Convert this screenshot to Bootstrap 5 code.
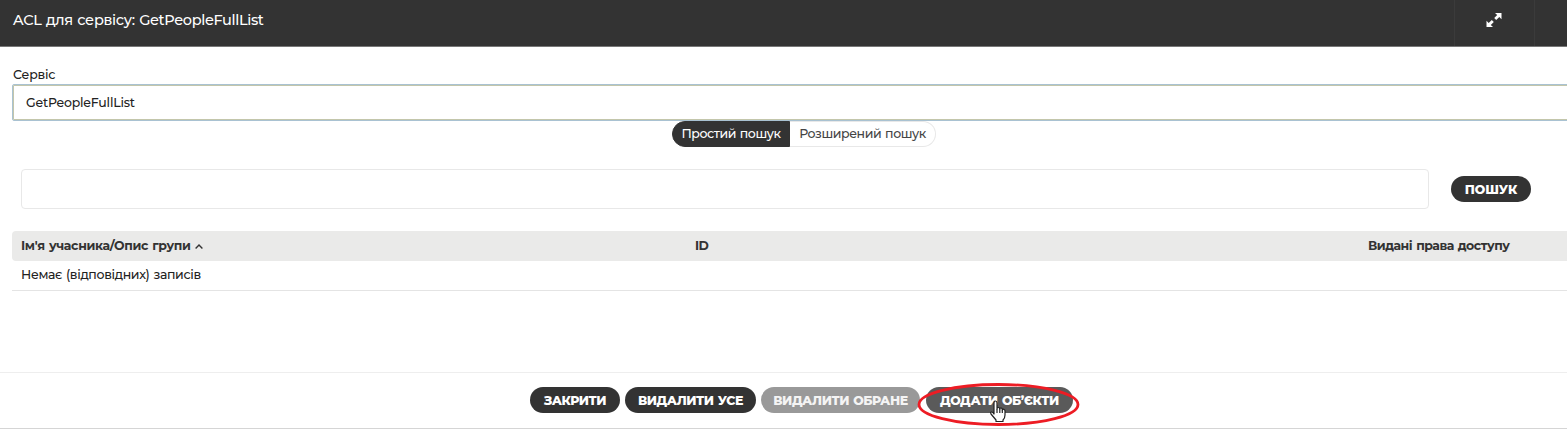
<!DOCTYPE html>
<html lang="uk">
<head>
<meta charset="utf-8">
<meta name="viewport" content="width=device-width, initial-scale=1">
<title>ACL для сервісу</title>
<link href="https://cdn.jsdelivr.net/npm/bootstrap@5.3.0/dist/css/bootstrap.min.css" rel="stylesheet">
<style>
body{font-family:Montserrat,Inter,sans-serif;font-size:12.5px;line-height:20px;color:#222;background:#fff;height:429px;overflow:hidden;word-spacing:1px}
.dialog-head{height:47px;background:#333;border-bottom:1px solid #777;color:#fff;padding-left:13px}
.dialog-title{font-size:14.5px;font-weight:500;line-height:20px;padding-top:10px;margin:0;letter-spacing:-.34px}
.head-cell{width:80px;border-left:1px solid #3b3b3b}
.head-edge{width:33px;border-left:1px solid #3b3b3b}
.service-label{display:block;margin:18px 0 -1px 13px;height:20px;font-weight:500;letter-spacing:-.2px}
.service-input{height:37px;margin-left:12px;width:1565px;padding:0 13px;border:1px solid #a9c2d2;box-shadow:inset 0 0 0 1px #c3c6ab;border-radius:2px;color:#222;font-weight:500;font-size:12.5px;letter-spacing:-.2px;line-height:33px;outline:0}
.service-input:focus,.service-input:read-only{border-color:#a9c2d2}
.tabs-line{height:26px;margin-left:672px}
.mode{height:26px;border:1px solid #e8e8e8;line-height:24px;letter-spacing:-.43px;color:#444;text-align:center;font-weight:500}
.mode-on{width:118px;background:#333;border-color:#333;color:#fff;border-radius:13px 0 0 13px}
.mode-off{width:146px;border-left:0;border-radius:0 13px 13px 0}
.search-line{margin:22px 0 0 21px;height:40px}
.search-box{width:1408px;height:40px;border:1px solid #e8e8e8;border-radius:4px}
.pill{height:26px;border:0;border-radius:13px;padding:1px 0 0;background:#333;color:#fff;font-size:12.5px;font-weight:800;line-height:26px;text-align:center;white-space:nowrap;letter-spacing:-.45px;word-spacing:1px}
.pill-search{letter-spacing:0}
.pill:disabled{background:#999;color:#f4f4f4;opacity:1}
.pill-hover{background:#5a5a5a;letter-spacing:-.35px}
.acl-table{margin:22px 0 0 12px;width:1565px;table-layout:fixed;border-collapse:separate;border-spacing:0}
.acl-table th{height:30px;background:#eaeae9;padding:0 0 0 9px;font-weight:700;color:#333;letter-spacing:-.48px}
.acl-table th:first-child{border-radius:4px 0 0 4px;letter-spacing:-.34px}
.acl-table td{height:30px;padding:0 0 1px 9px;border-bottom:1px solid #e4e4e4;font-weight:500;letter-spacing:-.34px}
.dialog-foot{margin-top:81px;height:57px;border-top:1px solid #eee;border-bottom:1px solid #d5d5d5;padding:14px 0 0 530px}
.highlight{left:-9px;top:-5px;z-index:2}
.pointer{left:63px;top:13px;z-index:3}
</style>
</head>
<body class="d-flex flex-column">
<header class="dialog-head d-flex flex-shrink-0">
  <h1 class="dialog-title flex-grow-1">ACL для сервісу: GetPeopleFullList</h1>
  <div class="head-cell d-flex justify-content-center">
    <svg class="mt-2" width="22" height="24" viewBox="2.500 0 22 24" fill="#fff"><path d="M13.500 5H20v6.200l-2.200-2.100-3.100 2.900-2-2 3-3zM11.500 19H5v-6.200l2.200 2.100 3.100-2.900 2 2-3 3z"/></svg>
  </div>
  <div class="head-edge"></div>
</header>
<main>
  <label class="service-label" for="service">Сервіс</label>
  <input id="service" class="service-input d-block" value="GetPeopleFullList" readonly>
  <div class="tabs-line d-flex">
    <div class="mode mode-on">Простий пошук</div>
    <div class="mode mode-off">Розширений пошук</div>
  </div>
  <div class="search-line d-flex align-items-center">
    <input class="search-box" aria-label="Пошук">
    <button class="pill pill-search" style="margin-left:22px;width:80px">ПОШУК</button>
  </div>
  <table class="acl-table">
    <colgroup><col style="width:674px"><col style="width:673px"><col></colgroup>
    <thead><tr>
      <th>Ім'я учасника/Опис групи <svg width="8" height="5" viewBox="0 0 8 5" fill="none" stroke="#333" stroke-width="1.400"><path d="M.6 4.400 4 1l3.400 3.400"/></svg></th>
      <th>ID</th><th>Видані права доступу</th>
    </tr></thead>
    <tbody><tr><td colspan="3">Немає (відповідних) записів</td></tr></tbody>
  </table>
</main>
<footer class="dialog-foot d-flex">
  <button class="pill" style="width:90px">ЗАКРИТИ</button>
  <button class="pill" style="width:131px;margin-left:5px">ВИДАЛИТИ УСЕ</button>
  <button class="pill" style="width:159px;margin-left:5px" disabled>ВИДАЛИТИ ОБРАНЕ</button>
  <div class="position-relative" style="margin-left:6px">
    <button class="pill pill-hover" style="width:147px">ДОДАТИ ОБ’ЄКТИ</button>
    <svg class="highlight position-absolute" width="164" height="45" viewBox="0 0 164 45" fill="none" stroke="#ed1c24" stroke-width="2.800"><ellipse cx="81.500" cy="22.500" rx="79.500" ry="20"/></svg>
    <svg class="pointer position-absolute" width="18" height="23" viewBox="0 0 18 23" fill="#fff" stroke="#222" stroke-width="1.200" stroke-linejoin="round"><path d="M5 14V3Q5 1 6.500 1T8 3v6q0-1.500 1.300-1.500T10.800 9q0-1.200 1.200-1.200T13.300 10q.3-1 1.500-.7T16 11v4q0 3-2 5v1.500H7V20l-5-6q-1-2 .5-2T5 14z"/><path d="M8 9v4M10.800 9v4M13.300 10v3" fill="none"/></svg>
  </div>
</footer>
<script src="https://cdn.jsdelivr.net/npm/bootstrap@5.3.0/dist/js/bootstrap.bundle.min.js"></script>
</body>
</html>
